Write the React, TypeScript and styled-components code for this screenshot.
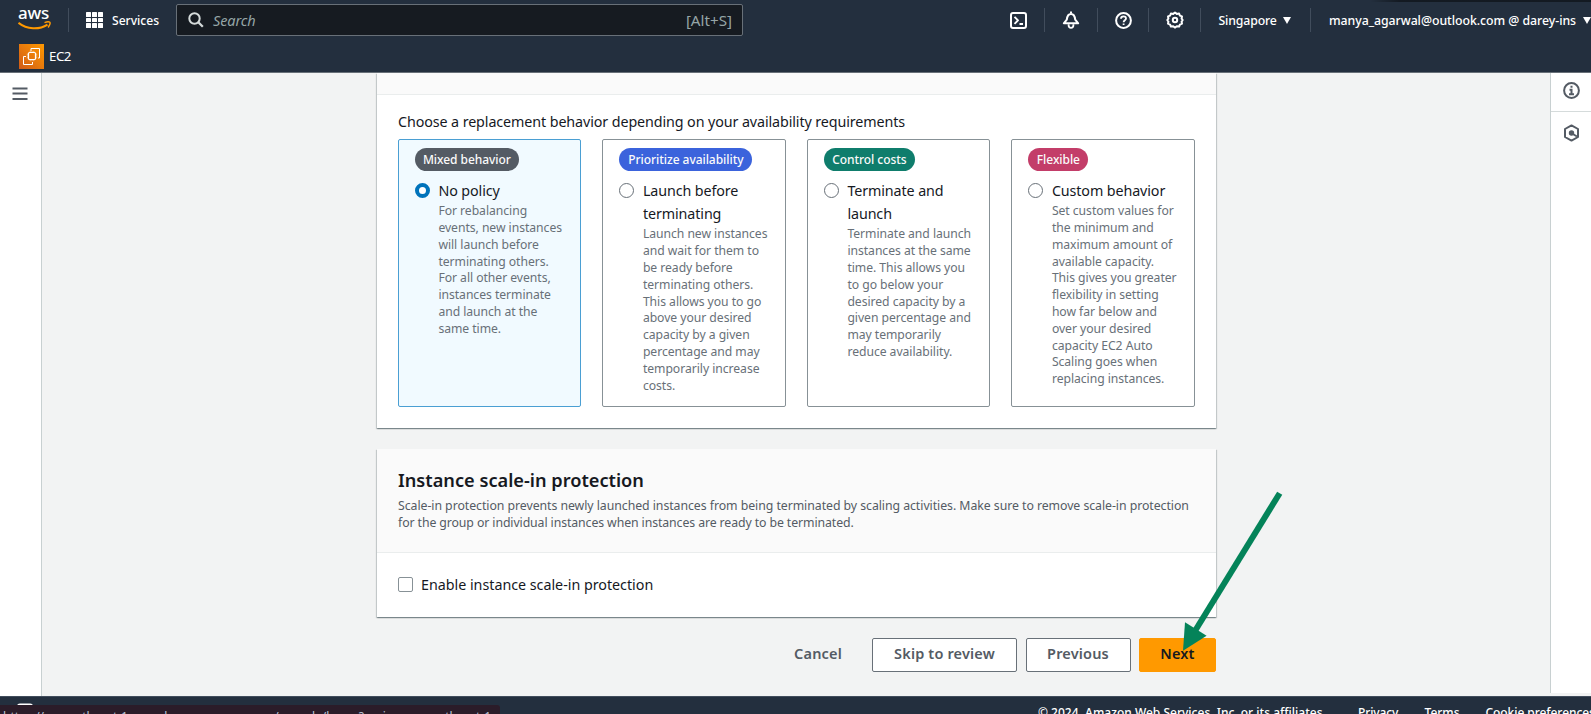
import React from 'react';
import styled, { createGlobalStyle, css } from 'styled-components';

const GlobalStyle = createGlobalStyle`
  * { box-sizing: border-box; }
  html, body { margin: 0; padding: 0; overflow: hidden; }
  body {
    font-family: 'Noto Sans', 'Open Sans', sans-serif;
    color: #16191f;
    background: #f2f3f3;
  }
  h2, p { margin: 0; }
  button { font-family: inherit; }
`;

const Page = styled.div`
  position: relative;
  display: flex;
  flex-direction: column;
  width: 1591px;
  height: 714px;
  overflow: hidden;
`;

/* ---------- header ---------- */

const Header = styled.header`
  flex: none;
  height: 73px;
  background: #232f3e;
  border-bottom: 1px solid #687078;
  color: #fff;
`;

const TopBar = styled.div`
  display: flex;
  align-items: center;
  height: 40px;
  padding-left: 18px;
  background: linear-gradient(90deg, transparent 1370px, rgba(0, 0, 0, 0.45) 1400px) 0 0 / 100% 2px no-repeat;
`;

const Logo = styled.div`
  display: flex;
  flex-direction: column;
  width: 34px;
  height: 28px;
  font-size: 17px;
  font-weight: 500;
  line-height: 14px;
  letter-spacing: -0.2px;
  svg { flex: none; margin-top: 1px; }
`;

const Divider = styled.span<{ $left?: number; $right?: number }>`
  flex: none;
  width: 1px;
  height: 24px;
  margin-left: ${(p) => p.$left ?? 0}px;
  margin-right: ${(p) => p.$right ?? 0}px;
  background: #414d5c;
`;

const Services = styled.div`
  display: flex;
  align-items: center;
  gap: 9px;
  width: 90px;
  font-size: 12.1px;
  font-weight: 500;
`;

const Dots = styled.span`
  display: grid;
  grid-template-columns: repeat(3, 5px);
  gap: 1px;
  i { width: 4.5px; height: 4.5px; border-radius: 0.5px; background: #fff; }
`;

const SearchBox = styled.div`
  display: flex;
  align-items: center;
  width: 567px;
  height: 32px;
  padding: 0 10px 1px 11px;
  border: 1px solid #687078;
  border-radius: 2px;
  background: #161b21;
  color: #95a5a6;
  font-size: 15.2px;
  svg { margin-right: 9px; }
  em { flex: 1; font-size: 14.5px; letter-spacing: -0.1px; }
`;

const IconCell = styled.span<{ $w: number }>`
  display: flex;
  justify-content: center;
  width: ${(p) => p.$w}px;
`;

const MenuLabel = styled.span<{ $w: number; $ls: number }>`
  display: flex;
  flex: none;
  align-items: center;
  justify-content: space-between;
  width: ${(p) => p.$w}px;
  font-size: 12.3px;
  font-weight: 500;
  letter-spacing: ${(p) => p.$ls}px;
  white-space: nowrap;
`;

const Caret = styled.i`
  width: 0;
  height: 0;
  border: 4px solid transparent;
  border-top: 7px solid #fff;
  border-bottom: 0;
`;

const Spacer = styled.span`
  flex: none;
  width: 261px;
`;

const Favorites = styled.div`
  display: flex;
  align-items: center;
  gap: 5px;
  height: 32px;
  padding: 1px 0 0 19px;
  font-size: 13.3px;
  letter-spacing: -0.5px;
  span { margin-bottom: 2px; }
`;

/* ---------- body ---------- */

const Body = styled.div`
  display: flex;
  flex: none;
  height: 623px;
`;

const LeftRail = styled.nav`
  display: flex;
  align-items: flex-start;
  width: 42px;
  padding: 14px 0 0 12px;
  border-right: 1px solid #c8d0d1;
  background: #fff;
`;

const RightRail = styled.aside`
  width: 41px;
  height: 620px;
  border-left: 1px solid #c8d0d1;
  background: #fff;
`;

const RailItem = styled.div<{ $h: number; $line?: boolean }>`
  display: flex;
  align-items: center;
  justify-content: center;
  height: ${(p) => p.$h}px;
  padding-left: 1px;
  ${(p) => p.$line && css`padding-bottom: 4px; border-bottom: 1px solid #d5dbdb;`}
`;

const Main = styled.main`
  flex: 1;
  padding: 0 334px 0 335px;
`;

const Panel = styled.section<{ $h: number; $gap?: number }>`
  width: 839px;
  height: ${(p) => p.$h}px;
  margin-top: ${(p) => p.$gap ?? 0}px;
  background: #fff;
  box-shadow: 0 1px 1px 0 rgba(0, 28, 36, 0.3), 1px 1px 1px 0 rgba(0, 28, 36, 0.15),
    -1px 1px 1px 0 rgba(0, 28, 36, 0.15);
`;

const PanelHeader = styled.div<{ $h: number }>`
  height: ${(p) => p.$h}px;
  padding: 18px 21px 0;
  border-bottom: 1px solid #eaeded;
  background: #fafafa;
`;

const Title = styled.h2`
  font-size: 18.2px;
  font-weight: 600;
  line-height: 26px;
`;

const TitleNote = styled.p`
  margin-top: 4px;
  font-size: 12.3px;
  line-height: 17px;
  letter-spacing: -0.052px;
  color: #545b64;
  white-space: nowrap;
  span { letter-spacing: -0.1px; }
`;

const Question = styled.p`
  padding: 15px 21px 6px;
  font-size: 14.3px;
  line-height: 23px;
  letter-spacing: -0.1px;
`;

const Tiles = styled.div`
  display: grid;
  grid-template-columns: repeat(4, 1fr);
  gap: 21px;
  height: 268px;
  padding: 0 21.4px 0 20.600px;
`;

const Tile = styled.label<{ $on?: boolean }>`
  padding: 8px 0 0 16.3px;
  border: 1px solid ${(p) => (p.$on ? '#4a9fd3' : '#879196')};
  border-radius: 2px;
  background: ${(p) => (p.$on ? '#f1faff' : '#fff')};
`;

const Badge = styled.span<{ $color: string; $w: number }>`
  display: flex;
  align-items: center;
  justify-content: center;
  width: ${(p) => p.$w}px;
  height: 22.5px;
  border-radius: 12px;
  background: ${(p) => p.$color};
  color: #fafafa;
  font-size: 12px;
  font-weight: 500;
  letter-spacing: -0.05px;
`;

const Option = styled.div`
  display: flex;
  gap: 8.5px;
  margin-top: 8px;
`;

const Radio = styled.i<{ $on?: boolean }>`
  flex: none;
  width: 15px;
  height: 15px;
  margin-top: 4.5px;
  border-radius: 50%;
  border: ${(p) => (p.$on ? '4.5px solid #0073bb' : '1px solid #687078')};
  background: #fff;
`;

const OptionName = styled.div`
  font-size: 14.3px;
  line-height: 23.2px;
  letter-spacing: -0.1px;
`;

const OptionText = styled.div`
  margin-top: 1.500px;
  font-size: 12.2px;
  line-height: 16.8px;
  letter-spacing: -0.05px;
  color: #687078;
  white-space: nowrap;
`;

const CheckRow = styled.label`
  display: flex;
  align-items: center;
  gap: 8px;
  height: 63px;
  padding: 0 21px;
  font-size: 14.3px;
  letter-spacing: -0.02px;
  span { margin-bottom: 1px; }
`;

const Checkbox = styled.i`
  width: 15px;
  height: 15px;
  border: 1px solid #879196;
  border-radius: 2px;
  background: #fff;
`;

const Actions = styled.div`
  display: flex;
  justify-content: flex-end;
  gap: 8.5px;
  width: 839px;
  margin-top: 21px;
`;

const Button = styled.button<{ $w: number; $kind?: 'link' | 'primary' }>`
  width: ${(p) => p.$w}px;
  height: 34px;
  padding: 0 0 4px;
  border: 1px solid #687078;
  border-radius: 2px;
  background: #fff;
  color: #545b64;
  font-size: 14.5px;
  font-weight: 600;
  letter-spacing: 0.16px;
  ${(p) => p.$kind === 'link' && css`border-color: transparent; background: transparent;`}
  ${(p) => p.$kind === 'primary' && css`border-color: #ff9900; background: #ff9900; color: #16191f;`}
`;

/* ---------- footer ---------- */

const Footer = styled.footer`
  display: flex;
  justify-content: space-between;
  flex: none;
  height: 18px;
  padding: 5px 0 0 17px;
  overflow: hidden;
  border-top: 1px solid #414d5c;
  background: #232f3e;
  color: #fff;
`;

const Legal = styled.div`
  display: flex;
  flex: none;
  width: 553px;
  font-size: 12px;
  font-weight: 500;
  line-height: 22px;
  white-space: nowrap;
`;

const LegalItem = styled.span<{ $w?: number; $ls?: number }>`
  flex: none;
  width: ${(p) => (p.$w ? p.$w + 'px' : 'auto')};
  letter-spacing: ${(p) => p.$ls ?? 0}px;
`;

const StatusBubble = styled.div`
  position: absolute;
  left: 0;
  top: 705px;
  width: 500px;
  height: 22px;
  padding: 3px 0 0 3px;
  border-top-right-radius: 3px;
  background: #2b1c29;
  color: #b9c3d6;
  font-size: 12px;
  line-height: 17px;
  letter-spacing: -0.04px;
  white-space: nowrap;
`;

const Arrow = styled.svg`
  position: absolute;
  left: 1170px;
  top: 480px;
`;

type Choice = { badge: string; color: string; w: number; name: string[]; text: string[] };

const choices: Choice[] = [
  {
    badge: 'Mixed behavior', color: '#545b64', w: 104, name: ['No policy'],
    text: ['For rebalancing', 'events, new instances', 'will launch before', 'terminating others.', 'For all other events,', 'instances terminate', 'and launch at the', 'same time.'],
  },
  {
    badge: 'Prioritize availability', color: '#3b63dc', w: 133, name: ['Launch before', 'terminating'],
    text: ['Launch new instances', 'and wait for them to', 'be ready before', 'terminating others.', 'This allows you to go', 'above your desired', 'capacity by a given', 'percentage and may', 'temporarily increase', 'costs.'],
  },
  {
    badge: 'Control costs', color: '#0f7d6c', w: 91, name: ['Terminate and', 'launch'],
    text: ['Terminate and launch', 'instances at the same', 'time. This allows you', 'to go below your', 'desired capacity by a', 'given percentage and', 'may temporarily', 'reduce availability.'],
  },
  {
    badge: 'Flexible', color: '#c33d69', w: 60, name: ['Custom behavior'],
    text: ['Set custom values for', 'the minimum and', 'maximum amount of', 'available capacity.', 'This gives you greater', 'flexibility in setting', 'how far below and', 'over your desired', 'capacity EC2 Auto', 'Scaling goes when', 'replacing instances.'],
  },
];

const Lines = ({ items }: { items: string[] }) => (
  <>{items.map((t) => <div key={t}>{t}</div>)}</>
);

const stroke = { fill: 'none', stroke: '#fff', strokeWidth: 2, strokeLinejoin: 'round' as const };

const ShellIcon = () => (
  <svg width="17" height="17" viewBox="0 0 17 17" {...stroke}>
    <rect x="1" y="1" width="15" height="15" rx="2" />
    <path d="M4.5 4.8 8 8.3l-3.5 3.5M9.5 12h3.5" strokeWidth="1.9" />
  </svg>
);

const BellIcon = () => (
  <svg width="18" height="18" viewBox="0 0 18 18" {...stroke}>
    <path d="M1.800 12.300 4.800 8.600C5.200 5 6.800 3 9 3s3.800 2 4.200 5.600l3 3.700z" />
    <path d="M9 .6v2" />
    <path d="M6.600 13.200v1.100c0 1.500 1 2.500 2.400 2.500s2.400-1 2.400-2.500v-1.100" strokeWidth="1.800" />
  </svg>
);

const HelpIcon = () => (
  <svg width="17" height="17" viewBox="0 0 17 17" {...stroke}>
    <circle cx="8.5" cy="8.5" r="7.4" />
    <path d="M6 6.800c0-1.500 1.100-2.400 2.500-2.400s2.500.9 2.500 2.200c0 1.700-2.400 1.700-2.400 3.600M8.600 11.400v1.700" strokeWidth="1.8" />
  </svg>
);

const GearIcon = () => (
  <svg width="18" height="18" viewBox="0 0 18 18" {...stroke}>
    <path d="M7.200 2.900 9 1.500l1.800 1.400 2.300-.4.800 2.100 2.100.8-.4 2.200L16.700 9l-1.100 1.600.4 2.100-2.100.9-.8 2-2.300-.3L9 16.600l-1.800-1.300-2.300.3-.8-2-2.100-.9.400-2.100L1.300 9l1.100-1.400L2 5.400l2.100-.8.800-2.100z" />
    <circle cx="9" cy="9" r="2.2" />
  </svg>
);

const Ec2Icon = () => (
  <svg width="25" height="25" viewBox="0 0 25 25" fill="none" stroke="#fff" strokeWidth="1">
    <defs>
      <linearGradient id="ec2" x1="0" y1="1" x2="1" y2="0">
        <stop offset="0" stopColor="#d05a17" />
        <stop offset="1" stopColor="#ff9900" />
      </linearGradient>
    </defs>
    <rect width="25" height="25" fill="url(#ec2)" stroke="none" />
    <path d="M12 7V4.500h8.500V14H19M7 12.500H4.500v8h9V18" />
    <rect x="9.500" y="8.500" width="7" height="7" rx="1" strokeWidth="1.200" />
    <path d="M11.200 6.800v1.700M13 6.800v1.700M14.800 6.800v1.700M11.200 15.500v1.700M13 15.500v1.700M14.800 15.500v1.700M7.800 10.200h1.700M7.800 12h1.700M7.800 13.800h1.700M16.500 10.200h1.700M16.500 12h1.700M16.500 13.800h1.700" strokeWidth=".6" />
  </svg>
);

export default function App() {
  return (
    <Page>
      <GlobalStyle />
      <Header>
        <TopBar>
          <Logo>
            aws
            <svg width="34" height="11" viewBox="0 0 34 11" fill="none" stroke="#ff9900">
              <path d="M.5 1.800C9 8.600 21 9 29.500 3.600" strokeWidth="2" />
              <path d="M26.500 1.600c2.500-.9 4.600-.9 5.300-.3.600.8-.2 3.200-1.700 5.200" strokeWidth="1.5" />
            </svg>
          </Logo>
          <Divider $left={16} $right={17} />
          <Services>
            <Dots>{Array.from({ length: 9 }, (_, i) => <i key={i} />)}</Dots>
            Services
          </Services>
          <SearchBox>
            <svg width="16" height="16" viewBox="0 0 16 16" fill="none" stroke="#d5dbdb" strokeWidth="2">
              <circle cx="6.5" cy="6.5" r="5.2" />
              <path d="m10.300 10.300 4.500 4.500" strokeWidth="2.3" />
            </svg>
            <em>Search</em>
            [Alt+S]
          </SearchBox>
          <Spacer />
          <IconCell $w={29}><ShellIcon /></IconCell>
          <Divider $left={11} $right={11} />
          <IconCell $w={30}><BellIcon /></IconCell>
          <Divider $left={11} $right={11} />
          <IconCell $w={28}><HelpIcon /></IconCell>
          <Divider $left={11} $right={11} />
          <IconCell $w={30}><GearIcon /></IconCell>
          <Divider $left={10} $right={17.5} />
          <MenuLabel $w={72.5} $ls={-0.15}>Singapore<Caret /></MenuLabel>
          <Divider $left={19} $right={18} />
          <MenuLabel $w={262} $ls={-0.04}>manya_agarwal@outlook.com @ darey-ins<Caret /></MenuLabel>
        </TopBar>
        <Favorites><Ec2Icon /><span>EC2</span></Favorites>
      </Header>

      <Body>
        <LeftRail>
          <svg width="16" height="14" viewBox="0 0 16 14" stroke="#545b64" strokeWidth="2">
            <path d="M.5 1.500h15M.5 6.500h15M.5 12h15" />
          </svg>
        </LeftRail>
        <Main>
          <Panel $h={355}>
            <PanelHeader $h={22} />
            <Question>Choose a replacement behavior depending on your availability requirements</Question>
            <Tiles>
              {choices.map((c, i) => (
                <Tile key={c.badge} $on={i === 0}>
                  <Badge $color={c.color} $w={c.w}>{c.badge}</Badge>
                  <Option>
                    <Radio $on={i === 0} />
                    <div>
                      <OptionName><Lines items={c.name} /></OptionName>
                      <OptionText><Lines items={c.text} /></OptionText>
                    </div>
                  </Option>
                </Tile>
              ))}
            </Tiles>
          </Panel>
          <Panel $h={168} $gap={21}>
            <PanelHeader $h={104}>
              <Title>Instance scale-in protection</Title>
              <TitleNote>
                Scale-in protection prevents newly launched instances from being terminated by scaling activities. Make sure to remove scale-in protection
                <br />
                <span>for the group or individual instances when instances are ready to be terminated.</span>
              </TitleNote>
            </PanelHeader>
            <CheckRow><Checkbox /><span>Enable instance scale-in protection</span></CheckRow>
          </Panel>
          <Actions>
            <Button $w={91} $kind="link">Cancel</Button>
            <Button $w={145}>Skip to review</Button>
            <Button $w={105}>Previous</Button>
            <Button $w={77} $kind="primary">Next</Button>
          </Actions>
        </Main>
        <RightRail>
          <RailItem $h={39} $line>
            <svg width="17" height="17" viewBox="0 0 17 17" fill="none" stroke="#545b64" strokeWidth="2">
              <circle cx="8.5" cy="8.5" r="7.4" />
              <path d="M6.500 7.700h2v4.500M6 12.200h5M7.500 4.800h2" />
            </svg>
          </RailItem>
          <RailItem $h={42}>
            <svg width="17" height="18" viewBox="0 0 17 18" fill="none" stroke="#545b64" strokeWidth="2">
              <path d="M8.500 1.400 15 5v8l-6.500 3.600L2 13V5z" strokeLinejoin="round" />
              <path d="m9 9.500 5 3" />
              <circle cx="8.5" cy="9" r="1.7" fill="#545b64" />
            </svg>
          </RailItem>
        </RightRail>
      </Body>

      <Footer>
        <svg width="16" height="16" viewBox="0 0 16 16" {...stroke}>
          <rect x="1" y="2.5" width="14" height="13" rx="2" />
        </svg>
        <Legal>
          <LegalItem $w={320} $ls={0.01}>© 2024, Amazon Web Services, Inc. or its affiliates.</LegalItem>
          <LegalItem $w={66.5} $ls={-0.1}>Privacy</LegalItem>
          <LegalItem $w={61}>Terms</LegalItem>
          <LegalItem $ls={-0.06}>Cookie preferences</LegalItem>
        </Legal>
      </Footer>

      <StatusBubble>https://ap-southeast-1.console.aws.amazon.com/console/home?region=ap-southeast-1</StatusBubble>
      <Arrow width="120" height="180" viewBox="1170 480 120 180" fill="#048359">
        <path d="m1279.700 493.200-85.500 139" stroke="#048359" strokeWidth="6" />
        <path d="m1183 650.700 2-28.400 21.600 13.500z" />
      </Arrow>
    </Page>
  );
}
